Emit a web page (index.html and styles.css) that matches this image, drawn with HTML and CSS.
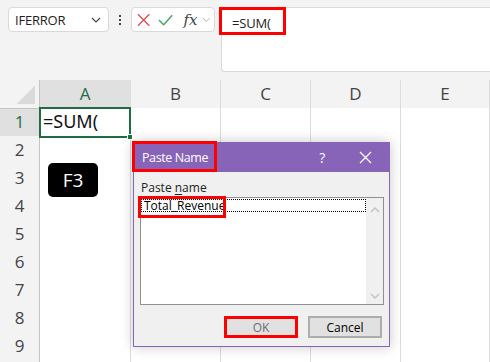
FILE: index.html
```html
<!DOCTYPE html>
<html lang="en">
<head>
    <meta charset="UTF-8">
    <title>Paste Name</title>
    <link rel="stylesheet" href="styles.css">
</head>
<body>

<div class="topbar">
    <div class="namebox">
        <span>IFERROR</span>
        <svg class="chev" width="10" height="6" viewBox="0 0 10 6"><path d="M1 1 L5 5 L9 1" fill="none" stroke="#444" stroke-width="1.2"/></svg>
    </div>
    <div class="dots"><i></i><i></i><i></i></div>
    <div class="fxbox">
        <svg width="14" height="14" viewBox="0 0 14 14"><path d="M1 1 L13 13 M13 1 L1 13" stroke="#e5484d" stroke-width="1.3"/></svg>
        <svg width="16" height="14" viewBox="0 0 16 14"><path d="M1 7 L6 12 L15 2" fill="none" stroke="#3aa657" stroke-width="1.4"/></svg>
        <span class="fx">fx</span>
        <svg width="9" height="6" viewBox="0 0 9 6"><path d="M1 1 L4.5 4.5 L8 1" fill="none" stroke="#aaa" stroke-width="1"/></svg>
    </div>
    <div class="formula">
        <span class="mark">=SUM(</span>
    </div>
</div>

<div class="sheet">
    <div class="row head">
        <div class="cell corner"><i></i></div>
        <div class="cell sel">A</div>
        <div class="cell">B</div>
        <div class="cell">C</div>
        <div class="cell">D</div>
        <div class="cell">E</div>
    </div>
    <div class="row">
        <div class="cell num sel">1</div>
        <div class="cell active">=SUM(</div>
        <div class="cell"></div><div class="cell"></div><div class="cell"></div><div class="cell"></div>
    </div>
    <div class="row">
        <div class="cell num">2</div>
        <div class="cell"></div><div class="cell"></div><div class="cell"></div><div class="cell"></div><div class="cell"></div>
    </div>
    <div class="row">
        <div class="cell num">3</div>
        <div class="cell"></div><div class="cell"></div><div class="cell"></div><div class="cell"></div><div class="cell"></div>
    </div>
    <div class="row">
        <div class="cell num">4</div>
        <div class="cell"></div><div class="cell"></div><div class="cell"></div><div class="cell"></div><div class="cell"></div>
    </div>
    <div class="row">
        <div class="cell num">5</div>
        <div class="cell"></div><div class="cell"></div><div class="cell"></div><div class="cell"></div><div class="cell"></div>
    </div>
    <div class="row">
        <div class="cell num">6</div>
        <div class="cell"></div><div class="cell"></div><div class="cell"></div><div class="cell"></div><div class="cell"></div>
    </div>
    <div class="row">
        <div class="cell num">7</div>
        <div class="cell"></div><div class="cell"></div><div class="cell"></div><div class="cell"></div><div class="cell"></div>
    </div>
    <div class="row">
        <div class="cell num">8</div>
        <div class="cell"></div><div class="cell"></div><div class="cell"></div><div class="cell"></div><div class="cell"></div>
    </div>
    <div class="row">
        <div class="cell num">9</div>
        <div class="cell"></div><div class="cell"></div><div class="cell"></div><div class="cell"></div><div class="cell"></div>
    </div>
    <div class="row stub">
        <div class="cell num"></div>
        <div class="cell"></div><div class="cell"></div><div class="cell"></div><div class="cell"></div><div class="cell"></div>
    </div>
</div>

<div class="key">F3</div>

<div class="dialog">
    <div class="dlg-title">
        <span>Paste Name</span>
        <span class="help">?</span>
        <svg class="close" width="13" height="13" viewBox="0 0 13 13"><path d="M1 1 L12 12 M12 1 L1 12" stroke="#fff" stroke-width="1.2"/></svg>
        <i class="mark-title"></i>
    </div>
    <div class="dlg-body">
        <div class="label">Paste <u>n</u>ame</div>
        <div class="listbox">
            <div class="items">
                <div class="item">Total_Revenue</div>
                <i class="mark-item"></i>
            </div>
            <div class="scroll">
                <svg width="10" height="6" viewBox="0 0 10 6"><path d="M1 5 L5 1 L9 5" fill="none" stroke="#c4c4c4" stroke-width="1.5"/></svg>
                <svg width="10" height="6" viewBox="0 0 10 6"><path d="M1 1 L5 5 L9 1" fill="none" stroke="#c4c4c4" stroke-width="1.5"/></svg>
            </div>
        </div>
        <div class="buttons">
            <button class="ok">OK</button>
            <button>Cancel</button>
        </div>
    </div>
</div>

</body>
</html>
```

FILE: styles.css
```css
body {
    margin: 0;
    width: 490px;
    height: 362px;
    overflow: hidden;
    background: #f3f3f3;
    font-family: "Open Sans", "Noto Sans", sans-serif;
    color: #222;
    position: relative;
}
.topbar {
    display: flex;
    align-items: flex-start;
    height: 72px;
    padding: 7px 0 0 8px;
    box-sizing: border-box;
    margin-bottom: 8px;
}
.namebox {
    width: 101px;
    height: 25px;
    box-sizing: border-box;
    background: #fff;
    border: 1px solid #d9d9d9;
    border-radius: 4px;
    display: flex;
    align-items: center;
    justify-content: space-between;
    padding: 0 7px 0 6px;
    font-size: 13px;
    letter-spacing: -0.2px;
}
.dots {
    width: 22px;
    height: 25px;
    display: flex;
    flex-direction: column;
    align-items: center;
    justify-content: center;
    gap: 2px;
}
.dots i {
    width: 2px;
    height: 2px;
    background: #444;
}
.fxbox {
    width: 84px;
    height: 25px;
    box-sizing: border-box;
    background: #fff;
    border: 1px solid #d9d9d9;
    border-radius: 4px;
    display: flex;
    align-items: center;
    padding: 0 3px 0 5px;
    gap: 8px;
}
.fxbox .fx {
    font-family: "DejaVu Serif", "Liberation Serif", serif;
    font-style: italic;
    font-size: 15px;
    color: #444;
    margin-left: 2px;
    margin-right: -3px;
}
.formula {
    flex: 1;
    height: 65px;
    margin-left: 6px;
    box-sizing: border-box;
    background: #fff;
    border: 1px solid #d9d9d9;
    border-right: none;
    border-radius: 4px 0 0 4px;
}
.mark {
    display: inline-block;
    margin: -1px 0 0 -3px;
    padding: 0 12px 0 10px;
    height: 28px;
    line-height: 26px;
    box-sizing: border-box;
    border: 3px solid #f00;
    font-size: 13px;
    letter-spacing: -0.2px;
}

/* grid */
.row {
    display: grid;
    grid-template-columns: 40px 91px 90px 90px 90px 89px;
    height: 28px;
}
.row.stub {
    height: 2px;
}
.cell {
    box-sizing: border-box;
    border-right: 1px solid #dcdcdc;
    border-bottom: 1px solid #dcdcdc;
    background: #fff;
}
.stub .cell {
    border-bottom: none;
}
.head .cell {
    background: #f3f3f3;
    border-bottom-color: #c4c4c4;
    border-right-color: #dcdcdc;
    text-align: center;
    font-size: 17px;
    line-height: 28px;
    color: #444;
}
.head .cell.sel {
    background: #e0e0e0;
    color: #1e6e42;
}
.corner {
    position: relative;
    border-right-color: #c4c4c4 !important;
}
.corner i {
    position: absolute;
    right: 4px;
    bottom: 4px;
    width: 19px;
    height: 19px;
    background: linear-gradient(135deg, transparent 50%, #dadada 50%);
}
.num {
    background: #f3f3f3;
    border-right-color: #c4c4c4;
    border-bottom-color: #e1e1e1;
    text-align: center;
    font-size: 17px;
    line-height: 28px;
    color: #444;
}
.num.sel {
    background: #e0e0e0;
    color: #1e6e42;
}
.active {
    position: relative;
    font-family: "Noto Sans", "Open Sans", sans-serif;
    font-size: 18px;
    line-height: 27px;
    padding-left: 3px;
    color: #111;
}
.active::after {
    content: "";
    position: absolute;
    left: -1px;
    top: -1px;
    right: -1px;
    bottom: -2px;
    border: 2px solid #1e6e42;
}
.active::before {
    content: "";
    position: absolute;
    right: -3px;
    bottom: -4px;
    width: 4px;
    height: 4px;
    background: #1e6e42;
    border: 1px solid #fff;
    z-index: 1;
}

.key {
    position: absolute;
    left: 48px;
    top: 163px;
    width: 50px;
    height: 34px;
    background: #000;
    border-radius: 5px;
    color: #fff;
    font-size: 19px;
    line-height: 34px;
    text-align: center;
}

/* dialog */
.dialog {
    position: absolute;
    left: 133px;
    top: 142px;
    width: 257px;
    height: 205px;
    box-sizing: border-box;
    border: 1px solid #8764b8;
    background: #f0f0f0;
    box-shadow: 0 0 12px rgba(0, 0, 0, 0.22);
    font-size: 12px;
}
.dlg-title {
    position: relative;
    height: 29px;
    background: #8764b8;
    color: #fff;
    display: flex;
    align-items: center;
    padding: 0 17px 0 8px;
    font-size: 12.5px;
    letter-spacing: -0.4px;
}
.help {
    margin-left: auto;
    margin-right: 34px;
    font-size: 14px;
}
.mark-title {
    position: absolute;
    left: -2px;
    top: -2px;
    width: 85px;
    height: 31px;
    box-sizing: border-box;
    border: 3px solid #f00;
}
.dlg-body {
    padding: 8px 6px 0 6px;
}
.label {
    height: 16px;
    line-height: 16px;
    padding-left: 1px;
}
.label u {
    text-decoration-thickness: 1px;
    text-underline-offset: 2px;
}
.listbox {
    margin-top: 1px;
    width: 244px;
    height: 108px;
    box-sizing: border-box;
    border: 1px solid #8f8f94;
    background: #fff;
    display: flex;
}
.items {
    position: relative;
    flex: 1;
    padding-top: 1px;
}
.item {
    height: 13px;
    line-height: 12px;
    border: 1px dotted #000;
    box-sizing: border-box;
    padding-left: 2px;
    color: #000;
}
.mark-item {
    position: absolute;
    left: -3px;
    top: -2px;
    width: 88px;
    height: 22px;
    box-sizing: border-box;
    border: 3px solid #f00;
}
.scroll {
    width: 17px;
    background: #f0f0f0;
    display: flex;
    flex-direction: column;
    align-items: center;
    justify-content: space-between;
    padding: 9px 0 5px;
    box-sizing: border-box;
}
.buttons {
    display: flex;
    justify-content: flex-end;
    gap: 10px;
    margin-top: 11px;
    padding-right: 1px;
}
button {
    width: 74px;
    height: 22px;
    box-sizing: border-box;
    border: 2px solid #adadad;
    background: #e1e1e1;
    font-family: "Open Sans", "Noto Sans", sans-serif;
    font-size: 12px;
    color: #000;
    padding: 0;
}
button.ok {
    border: 3px solid #f00;
    color: #6d6d6d;
}
```
